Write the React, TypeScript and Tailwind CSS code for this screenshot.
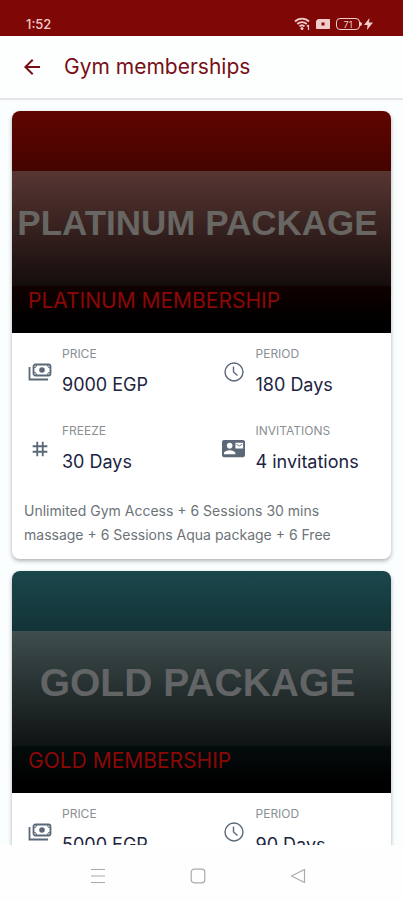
import React from "react";
import { MdArrowBack, MdContactMail, MdTag } from "react-icons/md";

type Plan = {
  name: string;
  banner: string;
  bannerClass: string;
  textClass: string;
  price: string;
  period: string;
  freeze: string;
  invitations: string;
  description: string;
};

const plans: Plan[] = [
  {
    name: "PLATINUM MEMBERSHIP",
    banner: "PLATINUM PACKAGE",
    bannerClass: "bg-[#600500]",
    textClass: "text-[35px] text-[#686662]",
    price: "9000 EGP",
    period: "180 Days",
    freeze: "30 Days",
    invitations: "4 invitations",
    description: "Unlimited Gym Access + 6 Sessions 30 mins massage + 6 Sessions Aqua package + 6 Free",
  },
  {
    name: "GOLD MEMBERSHIP",
    banner: "GOLD PACKAGE",
    bannerClass: "bg-[#1a474c]",
    textClass: "text-[39px] text-[#626466]",
    price: "5000 EGP",
    period: "90 Days",
    freeze: "20 Days",
    invitations: "3 invitations",
    description: "Unlimited Gym Access + 4 Sessions 30 mins massage + 4 Sessions Aqua package + 4 Free",
  },
];

export default function App() {
  return (
    <div className="flex h-screen flex-col bg-[#fafefe] font-['Inter',sans-serif]">
      <StatusBar />
      <header className="z-10 flex h-16 shrink-0 items-center gap-5 border-b-2 border-[#e3e7e7] bg-[#fdffff] px-5 text-[#780f16]">
        <button aria-label="Back">
          <MdArrowBack size={24} />
        </button>
        <h1 className="text-[21px]">Gym memberships</h1>
      </header>

      <main className="flex min-h-0 flex-1 flex-col gap-3 overflow-y-auto px-3 pt-[11px] [scrollbar-width:none]">
        {plans.map((plan) => (
          <PlanCard key={plan.name} plan={plan} />
        ))}
      </main>

      <NavBar />
    </div>
  );
}

function PlanCard({ plan }: { plan: Plan }) {
  return (
    <article className="shrink-0 overflow-hidden rounded-lg bg-white pb-3 shadow-[0_2px_4px_rgba(0,0,0,0.3)]">
      <div className={`relative flex h-[222px] flex-col ${plan.bannerClass}`}>
        <div className="mt-15 h-[115px] bg-[#93918c]/50" />
        {/* Darkens towards the bottom so the name stays readable */}
        <div className="absolute inset-0 bg-linear-to-b from-transparent to-black to-95%" />
        <p
          className={`absolute inset-x-0 top-15 flex h-[104px] items-center justify-center pr-2 font-['Liberation_Sans',sans-serif] font-bold whitespace-nowrap ${plan.textClass}`}
        >
          {plan.banner}
        </p>
        <h2 className="absolute bottom-[18px] left-4 text-[21px] leading-7 text-[#8b0807]">{plan.name}</h2>
      </div>

      <dl className="grid grid-cols-2 gap-x-5 gap-y-[26px] pt-[13px] pl-3">
        <Detail icon={<PaymentsIcon />} label="PRICE" value={plan.price} />
        <Detail icon={<ClockIcon />} label="PERIOD" value={plan.period} />
        <Detail icon={<MdTag size={22} />} label="FREEZE" value={plan.freeze} />
        <Detail icon={<MdContactMail size={23} />} label="INVITATIONS" value={plan.invitations} />
      </dl>

      <p className="mt-[25px] px-3 text-[14px] leading-6 text-[#6c7378]">{plan.description}</p>
    </article>
  );
}

function Detail({ icon, label, value }: { icon: React.ReactNode; label: string; value: string }) {
  return (
    <div className="flex items-center gap-1.5">
      <span className="flex w-8 shrink-0 justify-center text-[#5a6878]">{icon}</span>
      <div>
        <dt className="text-[12px] leading-4 text-[#8a8f94]">{label}</dt>
        <dd className="pt-[11px] text-[18px] leading-6 whitespace-nowrap text-[#1c2440]">{value}</dd>
      </div>
    </div>
  );
}

function PaymentsIcon() {
  return (
    <svg width="24" height="24" viewBox="0 0 24 24" fill="none" stroke="currentColor" strokeWidth="1.8">
      <path d="M1.5 7v12.5H20" />
      <rect x="5.5" y="4.5" width="17" height="11" rx="2" />
      <circle cx="14" cy="10" r="2.8" fill="currentColor" stroke="none" />
      <path d="M5.5 8a3 3 0 0 0 3-3M22.5 8a3 3 0 0 1-3-3M5.5 12a3 3 0 0 1 3 3M22.5 12a3 3 0 0 0-3 3" strokeWidth="1" />
    </svg>
  );
}

function ClockIcon() {
  return (
    <svg width="22" height="22" viewBox="0 0 22 22" fill="none" stroke="currentColor" strokeWidth="1.4">
      <circle cx="11" cy="11" r="9" />
      <path d="M10.5 5.5V11l4 3.5" />
    </svg>
  );
}

function StatusBar() {
  return (
    <div className="flex h-9 shrink-0 items-end justify-between bg-[#7f0706] pr-[30px] pb-1 pl-[26px] text-[#f0cccb]">
      <span className="text-[13px] leading-4 font-medium">1:52</span>
      <div className="flex h-4 items-center gap-1">
        {/* Wifi */}
        <svg width="18" height="14" viewBox="0 0 18 14" fill="none" stroke="currentColor" strokeWidth="1.8">
          <path d="M1 4.5a10 10 0 0 1 14 0M3.3 7a6.6 6.6 0 0 1 9.4 0M5.5 9.4a3.6 3.6 0 0 1 5 0" />
          <circle cx="8" cy="11.5" r="1.5" fill="currentColor" stroke="none" />
          <path d="M14.5 8v5M12.8 9.5l1.7-1.7" strokeWidth="1.2" />
        </svg>
        {/* Sim card */}
        <svg width="14" height="12" viewBox="0 0 14 12" fill="currentColor">
          <path fillRule="evenodd" d="M2 1h11a1 1 0 0 1 1 1v8a1 1 0 0 1-1 1H1a1 1 0 0 1-1-1V3zM5.5 4.5v3h3v-3z" />
        </svg>
        <div className="ml-0.5 flex items-center">
          <span className="flex h-3 w-6 items-center justify-center rounded-sm border border-current text-[9px] leading-none">
            71
          </span>
          <span className="h-1 w-0.5 rounded-r-sm bg-current" />
          <svg className="ml-0.5" width="9" height="12" viewBox="0 0 9 12" fill="currentColor">
            <path d="M5.5 0 0 7h3.5L3 12l6-7.5H5z" />
          </svg>
        </div>
      </div>
    </div>
  );
}

function NavBar() {
  return (
    <nav className="z-10 flex h-[55px] shrink-0 items-center justify-center gap-[84px] bg-[#fefefe] pt-1.5 pr-2 text-[#aaaaaa]">
      <button aria-label="Recent apps">
        <svg width="16" height="16" viewBox="0 0 16 16" stroke="currentColor" strokeWidth="1.2">
          <path d="M1 1.5h14M1 8h14M1 14.5h14" />
        </svg>
      </button>
      <button aria-label="Home">
        <svg width="16" height="16" viewBox="0 0 16 16" fill="none" stroke="currentColor" strokeWidth="1.2">
          <rect x="1.2" y="1.2" width="13.6" height="13.6" rx="3" />
        </svg>
      </button>
      <button aria-label="Back">
        <svg width="16" height="16" viewBox="0 0 16 16" fill="none" stroke="currentColor" strokeWidth="1.2" strokeLinejoin="round">
          <path d="M14.5 1.5v13L1.5 8z" />
        </svg>
      </button>
    </nav>
  );
}
